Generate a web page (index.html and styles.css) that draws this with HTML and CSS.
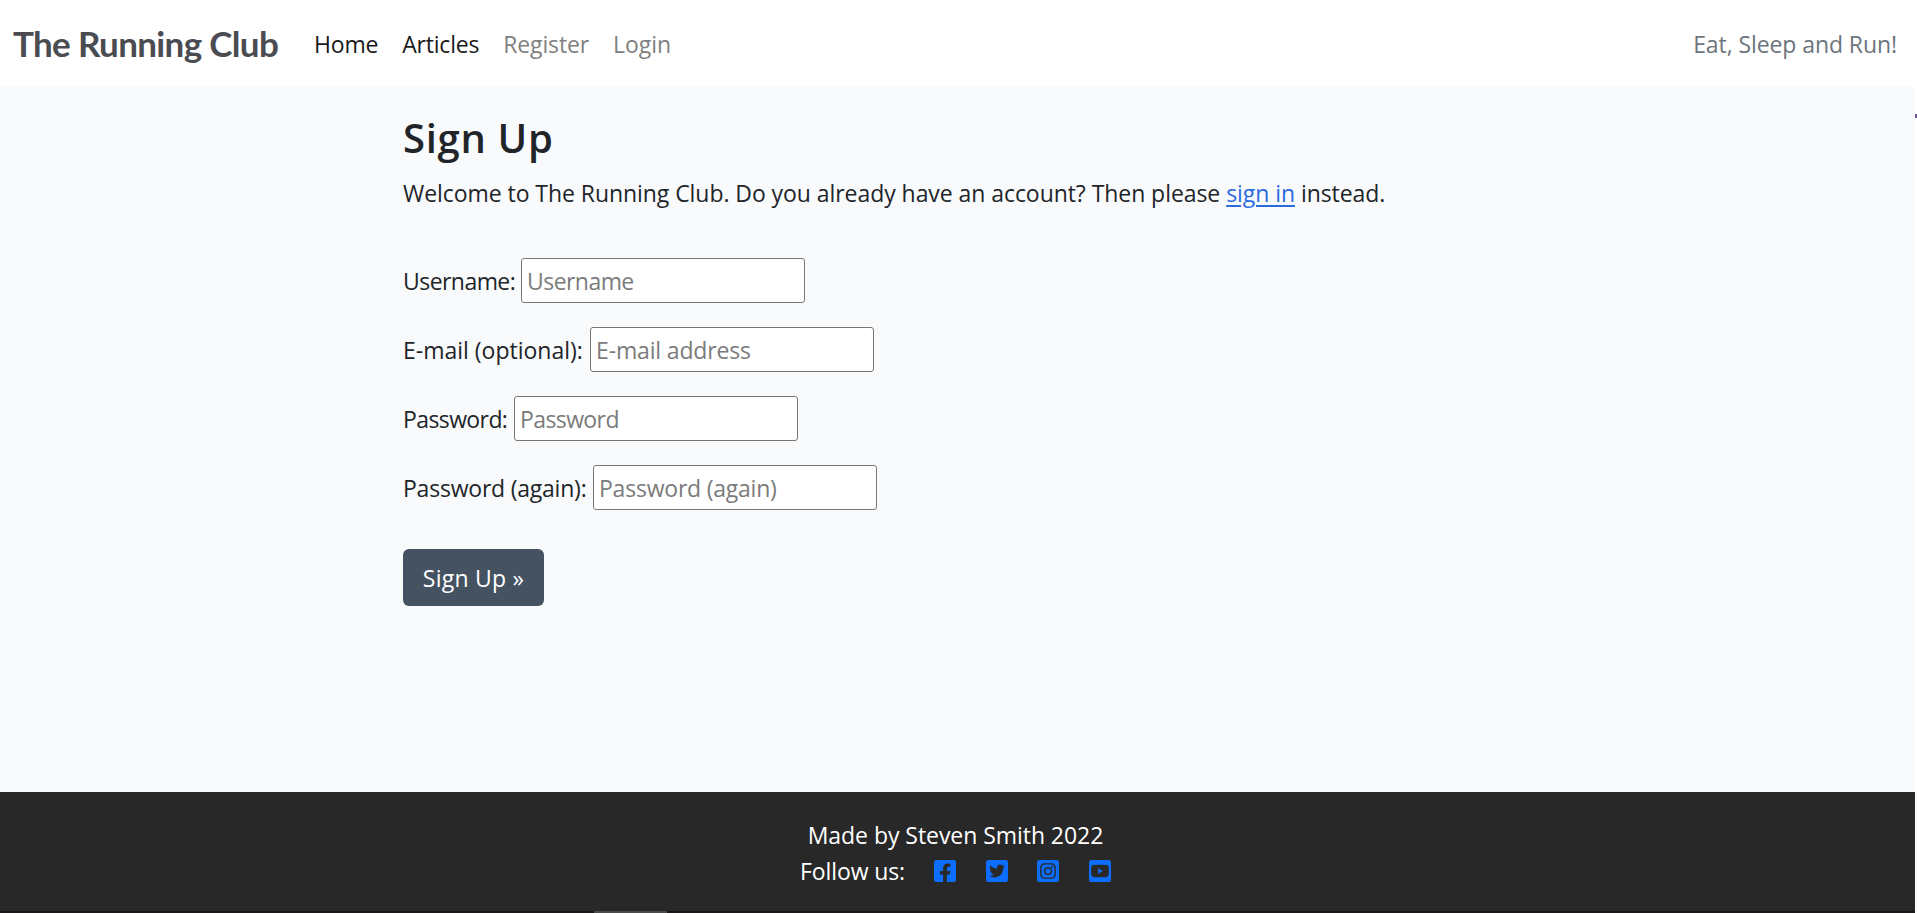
FILE: index.html
```html
<!DOCTYPE html>
<html lang="en">
<head>
<meta charset="utf-8">
<title>The Running Club</title>
<link rel="stylesheet" href="styles.css">
</head>
<body>
<div class="page">
  <header class="navbar">
    <a class="brand">The Running Club</a>
    <nav class="links">
      <a class="link active home">Home</a>
      <a class="link active articles">Articles</a>
      <a class="link register">Register</a>
      <a class="link login">Login</a>
    </nav>
    <span class="motto">Eat, Sleep and Run!</span>
  </header>
  <main class="content">
    <h1 class="title">Sign Up</h1>
    <p class="intro">Welcome to The Running Club. Do you already have an account? Then please <a class="signin">sign in</a> instead.</p>
    <form class="form">
      <div class="row row-user"><label class="label" for="u">Username:</label><input class="field" id="u" type="text" placeholder="Username"></div>
      <div class="row row-email"><label class="label" for="e">E-mail (optional):</label><input class="field" id="e" type="email" placeholder="E-mail address"></div>
      <div class="row row-pass"><label class="label" for="p">Password:</label><input class="field" id="p" type="password" placeholder="Password"></div>
      <div class="row row-again"><label class="label" for="a">Password (again):</label><input class="field" id="a" type="password" placeholder="Password (again)"></div>
      <button class="submit" type="button">Sign Up »</button>
    </form>
  </main>
  <footer class="footer">
    <p class="credit">Made by Steven Smith 2022</p>
    <div class="social">
      <span class="follow">Follow us:</span>
      <svg class="icon" viewBox="0 32 448 448"><path d="M400 32H48A48 48 0 0 0 0 80v352a48 48 0 0 0 48 48h137.250V327.690h-63V256h63v-54.640c0-62.150 37-96.480 93.670-96.480 27.140 0 55.520 4.840 55.520 4.840v61h-31.270c-30.810 0-40.420 19.120-40.420 38.730V256h68.780l-11 71.690h-57.780V480H400a48 48 0 0 0 48-48V80a48 48 0 0 0-48-48z"/></svg>
      <svg class="icon" viewBox="0 32 448 448"><path d="M400 32H48C21.500 32 0 53.500 0 80v352c0 26.500 21.500 48 48 48h352c26.500 0 48-21.500 48-48V80c0-26.500-21.500-48-48-48zm-48.900 158.800c.2 2.800.2 5.700.2 8.500 0 86.700-66 186.600-186.600 186.600-37.200 0-71.700-10.800-100.700-29.400 5.300.6 10.400.8 15.800.8 30.700 0 58.900-10.400 81.400-28-28.800-.6-53-19.500-61.300-45.500 10.100 1.500 19.200 1.500 29.600-1.200-30-6.100-52.500-32.500-52.500-64.400v-.8c8.700 4.900 18.900 7.900 29.600 8.300a65.447 65.447 0 0 1-29.200-54.600c0-12.200 3.200-23.400 8.900-33.100 32.300 39.800 80.800 65.800 135.200 68.600-9.300-44.500 24-80.600 64-80.600 18.900 0 35.900 7.900 47.900 20.700 14.800-2.800 29-8.300 41.600-15.800-4.900 15.200-15.200 28-28.800 36.100 13.200-1.400 26-5.100 37.800-10.200-8.900 13.100-20.100 24.700-32.900 34z"/></svg>
      <svg class="icon" viewBox="0 32 448 448"><path d="M224 202.660A53.340 53.340 0 1 0 277.360 256 53.380 53.380 0 0 0 224 202.660zm124.710-41a54 54 0 0 0-30.410-30.410c-21-8.290-71-6.430-94.300-6.430s-73.250-1.930-94.310 6.430a54 54 0 0 0-30.410 30.410c-8.280 21-6.430 71.050-6.430 94.330s-1.850 73.270 6.470 94.340a54 54 0 0 0 30.410 30.410c21 8.290 71 6.430 94.310 6.430s73.240 1.930 94.300-6.430a54 54 0 0 0 30.410-30.410c8.350-21 6.430-71.050 6.430-94.330s1.920-73.260-6.430-94.330zM224 338a82 82 0 1 1 82-82 81.900 81.900 0 0 1-82 82zm85.380-148.300a19.140 19.140 0 1 1 19.130-19.140 19.100 19.100 0 0 1-19.090 19.180zM400 32H48A48 48 0 0 0 0 80v352a48 48 0 0 0 48 48h352a48 48 0 0 0 48-48V80a48 48 0 0 0-48-48zm-17.120 290c-1.290 25.630-7.140 48.340-25.850 67s-41.400 24.630-67 25.850c-26.410 1.490-105.590 1.490-132 0-25.630-1.290-48.260-7.150-67-25.850s-24.630-41.420-25.850-67c-1.490-26.420-1.490-105.610 0-132 1.290-25.630 7.070-48.340 25.850-67s41.470-24.560 67-25.780c26.410-1.490 105.590-1.490 132 0 25.630 1.290 48.330 7.150 67 25.850s24.630 41.420 25.850 67.050c1.490 26.320 1.490 105.440 0 131.880z"/></svg>
      <svg class="icon" viewBox="0 32 448 448"><path d="M186.800 202.100l95.200 54.100-95.200 54.100V202.100zM448 80v352c0 26.500-21.500 48-48 48H48c-26.500 0-48-21.500-48-48V80c0-26.500 21.500-48 48-48h352c26.500 0 48 21.500 48 48zm-42 176.300s0-59.600-7.600-88.200c-4.200-15.800-16.500-28.200-32.200-32.400C337.900 128 224 128 224 128s-113.900 0-142.200 7.700c-15.700 4.200-28 16.600-32.200 32.400-7.600 28.500-7.600 88.200-7.600 88.200s0 59.600 7.600 88.200c4.200 15.800 16.500 27.700 32.200 31.900C110.100 384 224 384 224 384s113.900 0 142.200-7.700c15.700-4.200 28-16.100 32.200-31.900 7.600-28.500 7.600-88.100 7.600-88.100z"/></svg>
    </div>
  </footer>
  <div class="edge"><span class="edge-thumb"></span></div>
</div>
<span class="side-mark"></span>
</body>
</html>
```
FILE: styles.css
```css
* { box-sizing: border-box; }
body {
  margin: 0;
  background: #fff;
  color: #212529;
  font-family: "Open Sans", "Noto Sans", sans-serif;
  font-size: 23px;
  line-height: 36px;
  overflow: hidden;
}
.page { display: flex; flex-direction: column; height: 913px; padding-right: 2px; }
.navbar { display: flex; align-items: center; height: 87px; padding: 0 18px 2px 13px; background: #fff; white-space: nowrap; }
.brand { width: 301px; font-family: Lato, sans-serif; font-weight: 700; font-size: 35px; letter-spacing: -0.66px; color: #4a4c52; }
.links { display: flex; gap: 24px; padding-top: 2px; }
.link { color: #7f7f7f; }
.active { color: #1a1a1a; }
.home { letter-spacing: -0.2px; }
.articles { letter-spacing: -0.2px; }
.register { letter-spacing: -0.15px; }
.motto { margin-left: auto; padding-top: 2px; letter-spacing: -0.08px; color: #6c757d; }
.content { flex: 1; background: #f9fafc; padding: 27px 0 0 403px; }
.title { margin: 0 0 13px; font-size: 40px; font-weight: 600; line-height: 48px; letter-spacing: 0.7px; }
.intro { margin: 0 0 47px; white-space: nowrap; letter-spacing: -0.06px; }
.signin { color: #2a6be0; text-decoration: underline; text-decoration-thickness: 2px; text-underline-offset: 3px; }
.row { display: flex; align-items: center; height: 69px; padding-bottom: 24px; white-space: nowrap; }
.row-user { letter-spacing: -0.55px; }
.row-user .label { width: 118px; }
.row-email .label { width: 187px; }
.row-email .field { letter-spacing: -0.15px; }
.row-pass { letter-spacing: -0.6px; }
.row-pass .label { width: 111px; }
.row-again { letter-spacing: -0.22px; }
.row-again .label { width: 190px; }
.field { width: 284px; height: 45px; padding: 0 5px; border: 1px solid #767676; border-radius: 3px; background: #fff; font: inherit; letter-spacing: inherit; }
.field::placeholder { color: #7b7b7b; opacity: 1; }
.submit { display: block; width: 141px; height: 57px; margin-top: 15px; padding: 0; border: 0; border-radius: 6px; background: #445261; color: #fff; font: inherit; letter-spacing: 0.25px; }
.footer { height: 119px; padding: 25px 4px 0 0; background: #282828; color: #fff; text-align: center; }
.credit { margin: 0; letter-spacing: -0.05px; }
.social { display: flex; align-items: center; height: 36px; padding-left: 800px; }
.follow { width: 134px; text-align: left; letter-spacing: -0.1px; }
.icon { width: 22px; height: 22px; margin-right: 29.600px; fill: #0d6efd; }
.edge { height: 2px; background: #1b1618; padding-left: 594px; }
.edge-thumb { display: block; width: 73px; height: 2px; background: #4b4b4b; }
.side-mark { position: absolute; top: 114px; right: 0; width: 2px; height: 4px; background: #6f5796; }
```
